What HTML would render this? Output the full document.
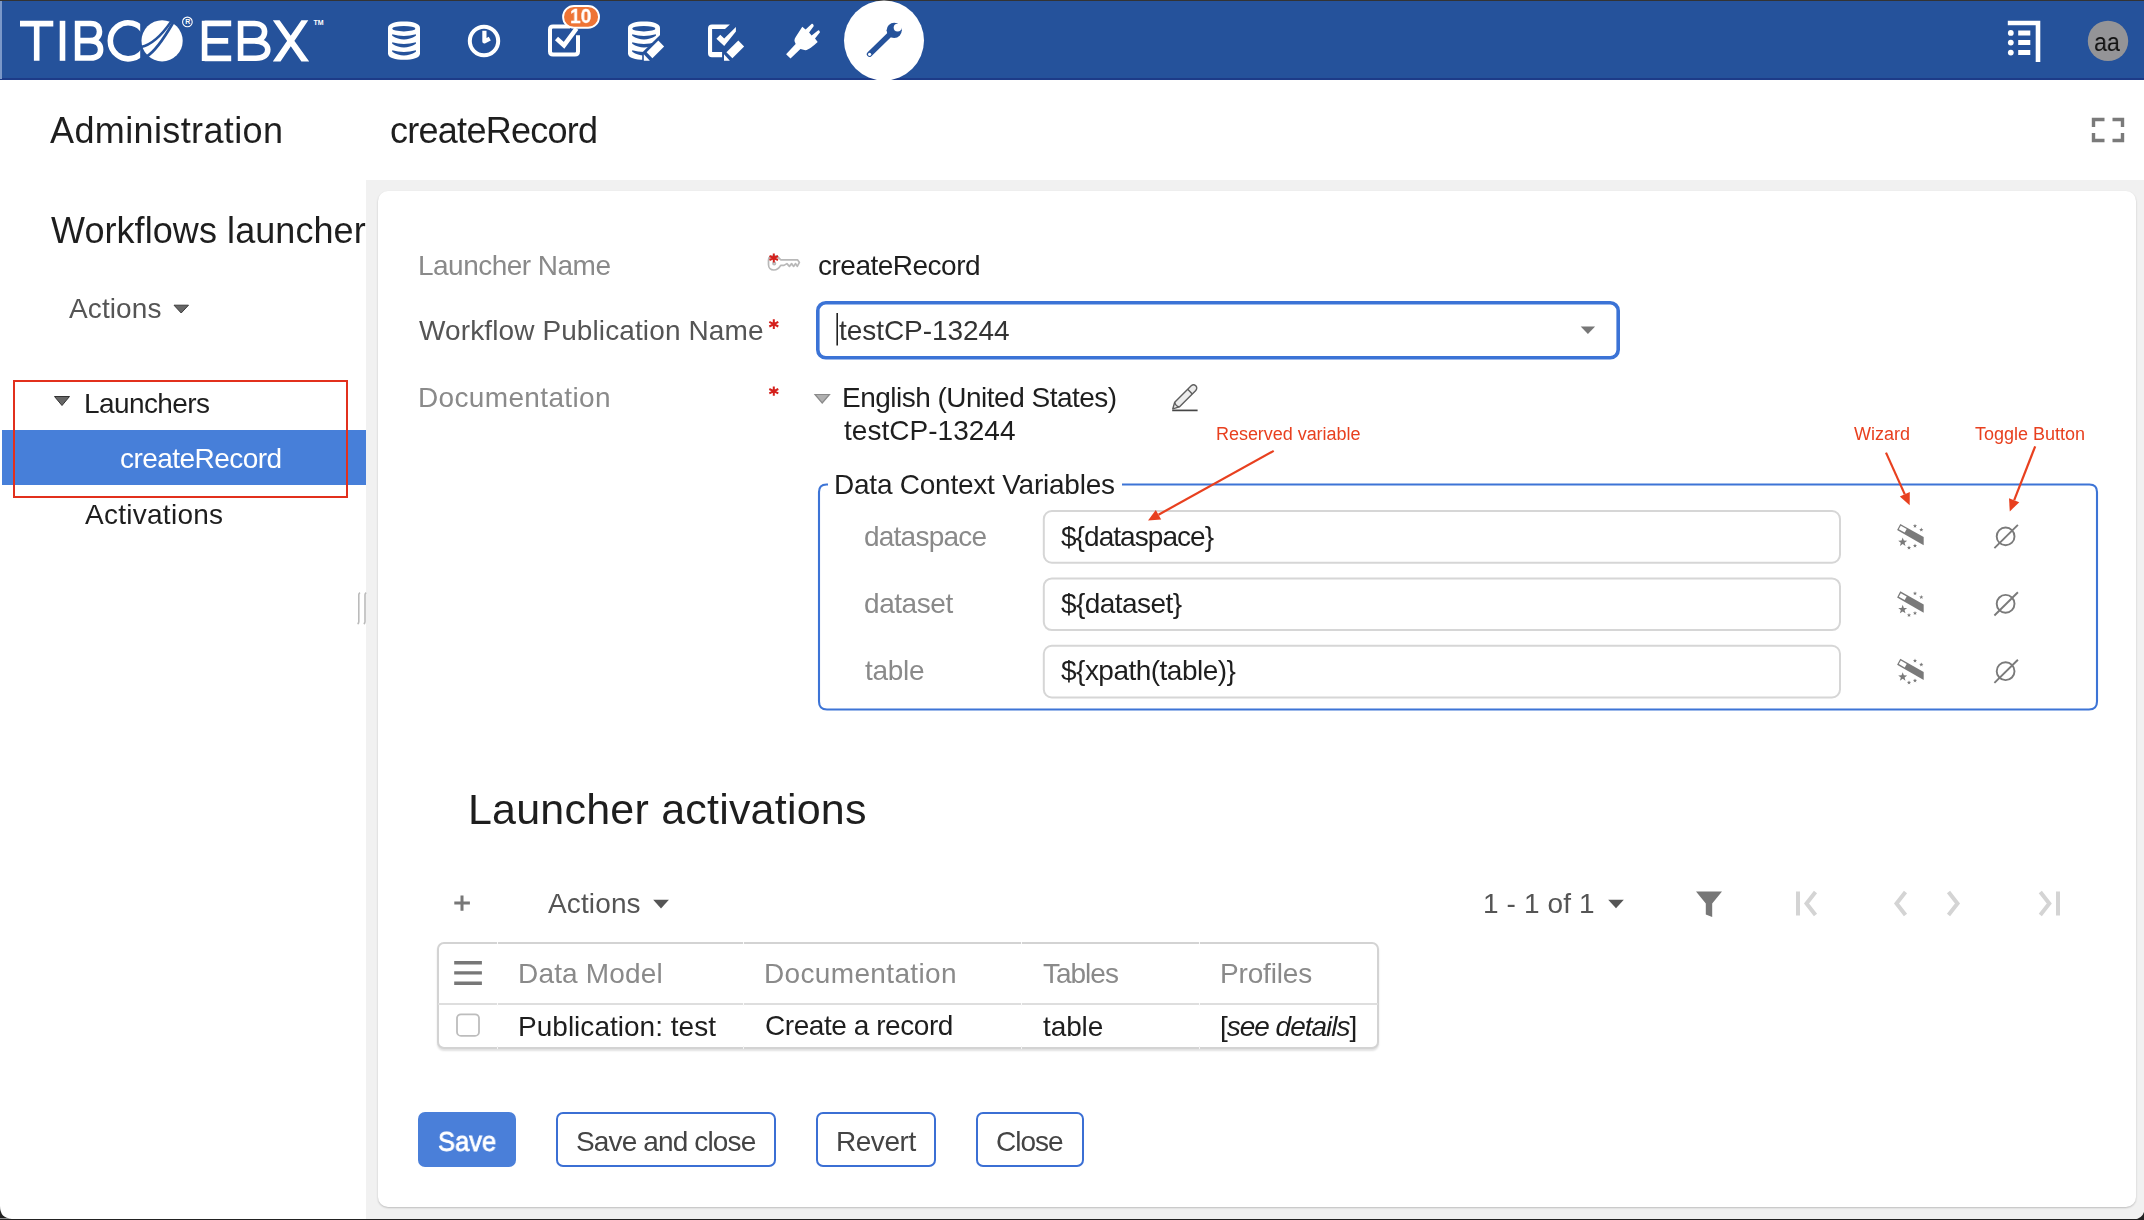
<!DOCTYPE html>
<html><head><meta charset="utf-8"><title>createRecord - TIBCO EBX</title>
<style>
html,body{margin:0;padding:0;background:#fff;}
body{width:2144px;height:1220px;position:relative;overflow:hidden;font-family:"Liberation Sans", sans-serif;}
.t{position:absolute;white-space:nowrap;will-change:transform;}
</style></head><body>
<div style="position:absolute;left:0px;top:0px;width:2144px;height:1px;background:#333"></div>
<div style="position:absolute;left:0px;top:1px;width:2144px;height:78px;background:#25529b"></div>
<div style="position:absolute;left:0px;top:78px;width:2144px;height:1.5px;background:#1d3b88"></div>
<div style="position:absolute;left:0px;top:1px;width:2px;height:78px;background:#7b98c9"></div>
<svg style="position:absolute;left:0px;top:0px;" width="340" height="80" viewBox="0 0 340 80"><defs><clipPath id="cclip"><rect x="100" y="10" width="40.2" height="60"/></clipPath></defs><g fill="none" stroke="#fff" stroke-width="5.6">
<path d="M20 23.6H53.3M36.7 23.6V60.8"/>
<path d="M62.5 20.8V60.8"/>
<path d="M77.6 20.8V60.8M77.6 23.5H90.5C97.5 23.5 99.5 27.5 99.5 31.5C99.5 36 96.5 40.6 90 40.6H77.6M90 40.6C98 40.6 100.6 45.5 100.6 49.5C100.6 54.5 97.5 58 90.5 58H77.6"/>
<path clip-path="url(#cclip)" d="M144.61 33.19A18 18 0 1 0 144.61 48.41"/>
<path d="M204.6 20.8V61M204.6 23.4H231.2M204.6 40.9H228.2M204.6 58.4H231.2"/>
<path d="M240.6 20.8V61M240.6 23.5H254C261 23.5 264.6 27 264.6 31.5C264.6 36.5 261 40.9 254 40.9H240.6M254 40.9C263 40.9 267.8 45 267.8 49.6C267.8 54.5 264 58.2 256 58.2H240.6"/>

</g>
<path d="M272.8 20.2H279.6L309.2 61.6H301.4ZM301.4 20.2H308.3L280.5 61.6H272.8Z" fill="#fff"/>
<circle cx="162.1" cy="40.8" r="20.6" fill="#fff"/>
<path d="M141 47 Q155.5 44.15 171.2 21.5" fill="none" stroke="#25529b" stroke-width="2.4"/>
<path d="M146.5 56.5 Q156.75 50.85 173.2 22.5" fill="none" stroke="#25529b" stroke-width="2.7"/>
<circle cx="187.4" cy="21.9" r="4.8" fill="none" stroke="#fff" stroke-width="1.1"/>
<text x="185.2" y="24.3" font-family="Liberation Sans" font-size="7" font-weight="bold" fill="#fff">R</text>
<text x="313.5" y="24.5" font-family="Liberation Sans" font-size="7" font-weight="bold" fill="#fff">TM</text>
</svg>
<svg style="position:absolute;left:0px;top:0px;overflow:visible" width="2144" height="80" viewBox="0 0 2144 80">
<!-- database -->
<path d="M388 28C388 23.5 395.5 21.6 404 21.6C412.5 21.6 420 23.5 420 28V53.5C420 58 412.5 59.8 404 59.8C395.5 59.8 388 58 388 53.5Z" fill="#fff"/>
<g fill="#25529b">
<ellipse cx="403.8" cy="28.7" rx="11.6" ry="2.7"/>
<path d="M392.2 34.3Q403.8 37.9 415.9 34.3V35.7Q403.8 43.2 392.2 35.7Z"/>
<path d="M392.2 42.3Q403.8 45.9 415.9 42.3V43.7Q403.8 51.2 392.2 43.7Z"/>
<path d="M392.2 50.3Q403.8 53.9 415.9 50.3V51.7Q403.8 59.2 392.2 51.7Z"/>
</g>
<!-- clock -->
<circle cx="484" cy="41" r="14.2" fill="none" stroke="#fff" stroke-width="4"/>
<path d="M484.4 30.7V41.5L489.8 38.6" fill="none" stroke="#fff" stroke-width="4.2" stroke-linejoin="round"/>
<!-- tasks -->
<path d="M570 26.5H553Q550 26.5 550 29.5V51.5Q550 54.5 553 54.5H575Q578 54.5 578 51.5V35.2" fill="none" stroke="#fff" stroke-width="4"/>
<path d="M556.5 38.5L564 45.3L576.5 28.5" fill="none" stroke="#fff" stroke-width="4.6"/>
<rect x="563.1" y="6" width="35.9" height="21.8" rx="10.9" fill="#ee7435" stroke="#fff" stroke-width="1.9"/>
<!-- db edit -->
<path d="M628 28C628 23.5 635.5 21.6 644 21.6C652.5 21.6 660 23.5 660 28V53.5C660 58 652.5 59.8 644 59.8C635.5 59.8 628 58 628 53.5Z" fill="#fff"/>
<g fill="#25529b">
<ellipse cx="643.8" cy="28.7" rx="11.6" ry="2.7"/>
<path d="M632.2 34.3Q643.8 37.9 655.9 34.3V35.7Q643.8 43.2 632.2 35.7Z"/>
<path d="M632.2 42.3Q643.8 45.9 655.9 42.3V43.7Q643.8 51.2 632.2 43.7Z"/>
<path d="M632.2 50.3Q643.8 53.9 655.9 50.3V51.7Q643.8 59.2 632.2 51.7Z"/>
<path d="M642.2 52.6L660.6 34.4H668V66H642.2Z"/>
</g>
<path d="M646.6 52.3L658.3 40.6L664.1 46.6L652.4 58.2Z" fill="#fff"/>
<path d="M643.8 54.3V60.8H649.9Z" fill="#fff"/>
<!-- checklist edit -->
<path d="M708 28.5Q708 24.4 712 24.4H729.9L725 29.1H712.1V51.9H722.1V57.2H712Q708 57.2 708 53.2Z" fill="#fff"/>
<path d="M716.4 38.8L720.3 34.7L724.2 38.5L735.9 26.9V31.4L724.2 46.1Z" fill="#fff"/>
<path d="M726.4 52.3L738.3 40.4L744.1 46.4L732.4 58.2Z" fill="#fff"/>
<path d="M724 54.3V60.8H729.9Z" fill="#fff"/>
<!-- plug -->
<path d="M786.1 54.3L797 42.6L802 47.6L790.5 58.4Z" fill="#fff"/>
<path d="M795.6 43.7C794 41 794 39.5 796 36.5L802.3 26.7L805.6 29.5L811.8 23.8Q813 23 813.8 25.9L809.1 32.6L811.6 35.5L818.3 30.2Q819.5 30 820 32.2L815 38.6L817.7 42C813 46 809 49.8 805.4 50.2L800.5 49Z" fill="#fff"/>
<!-- wrench circle -->
<circle cx="884" cy="40.5" r="40" fill="#fff"/>
<path d="M869.5 54.2L889.5 34.8" stroke="#25529b" stroke-width="5.4" stroke-linecap="round" fill="none"/>
<circle cx="894.2" cy="30.3" r="7.6" fill="#25529b"/>
<circle cx="897.6" cy="27.6" r="3.9" fill="#fff"/>
<path d="M897.6 27.6L903 22.3" stroke="#fff" stroke-width="5"/>
<circle cx="869.6" cy="54.3" r="1.6" fill="#fff"/>
<!-- list -->
<path d="M2007.8 23H2038V62" fill="none" stroke="#fff" stroke-width="4.6"/>
<circle cx="2010.8" cy="32.9" r="2.9" fill="#fff"/><circle cx="2010.8" cy="42.6" r="2.9" fill="#fff"/><circle cx="2010.8" cy="52.6" r="2.9" fill="#fff"/>
<path d="M2018.2 33H2030.3M2018.2 42.6H2030.3M2018.2 52.5H2030.3" stroke="#fff" stroke-width="5"/>
<!-- avatar -->
<circle cx="2108" cy="40.9" r="20.2" fill="#949497"/>
</svg>
<svg style="position:absolute;left:2090px;top:116px;" width="36" height="28" viewBox="0 0 36 28"><path d="M3.5 11V3.5H14.5M22.5 3.5H32.5V11M32.5 17V24.5H22.5M14.5 24.5H3.5V17" fill="none" stroke="#7a7a7a" stroke-width="3.4"/></svg>
<div style="position:absolute;left:366px;top:180px;width:1778px;height:1038.5px;background:#f1f1f1"></div>
<div style="position:absolute;left:378px;top:191px;width:1758px;height:1016px;background:#fff;border-radius:10px;box-shadow:0 1px 2px rgba(0,0,0,.22)"></div>
<div style="position:absolute;left:2px;top:429.8px;width:364px;height:55.0px;background:#477fd9"></div>
<div style="position:absolute;left:12.8px;top:379.8px;width:335.3px;height:118.0px;border:2px solid #e2301c;box-sizing:border-box"></div>
<svg style="position:absolute;left:0px;top:0px;" width="370" height="640" viewBox="0 0 370 640">
<path d="M174 305.2H188.5L181.2 313Z" fill="#666" stroke="#3c3c3c" stroke-width="1"/>
<path d="M54.5 396.5H69.5L62 405.5Z" fill="#666" stroke="#333" stroke-width="1"/>
<path d="M357.6 624Q358.8 623.2 358.8 621.8V594.8Q358.8 593.4 360 592.6M363.8 624Q365 623.2 365 621.8V594.8Q365 593.4 366.2 592.6" stroke="#bbb" stroke-width="1.6" fill="none"/>
</svg>
<svg style="position:absolute;left:0px;top:0px;overflow:visible" width="2144" height="1220" viewBox="0 0 2144 1220">
<!-- key icon -->
<g fill="none" stroke="#b8b8b8" stroke-width="1.7" stroke-linejoin="round">
<path d="M780.7 259.8H797.5L799.4 262.4L797.3 266.4L795.6 263.6L793.6 266.4L791.6 263.6L789.4 266.4L786.9 263.6L784 265.4H780.7C779 268.5 776.5 270 773.8 270C770.5 270 768.5 267.5 768.5 264.5V260C768.5 257 771 255.8 774.5 255.8C777 255.8 779 257.5 780.7 259.8Z"/>
<circle cx="774.2" cy="263.4" r="1.2"/>
</g>
<!-- asterisks -->
<g stroke="#d4201c" stroke-width="2" fill="none" stroke-linecap="butt">
<path d="M773.8 253.5V262.5M769.5 256L778 260M769.5 260L778 256"/>
<path d="M773.8 319.3V329M769.3 321.8L778.3 326.5M769.3 326.5L778.3 321.8"/>
<path d="M773.8 386.5V395.7M769.3 389L778.3 393.3M769.3 393.3L778.3 389"/>
</g>
<!-- input focus -->
<rect x="817.8" y="302.8" width="800.4" height="55" rx="8" fill="#fff" stroke="#3b73d6" stroke-width="3.6"/>
<path d="M837.2 313V345.5" stroke="#222" stroke-width="1.6"/>
<path d="M1580.7 326.4H1595.1L1587.9 334Z" fill="#777"/>
<!-- doc triangle -->
<path d="M815 394.5H829.5L822.2 403Z" fill="#b0b0b0" stroke="#8a8a8a" stroke-width="1.2"/>
<!-- pencil -->
<g stroke="#5e5e5e" stroke-width="1.4" stroke-linejoin="round">
<path d="M1172.8 408.8L1174.7 402.3L1191.2 385.8A3.25 3.25 0 0 1 1195.8 390.4L1179.3 406.9Z" fill="#ececec"/>
<path d="M1187.7 389.3L1192.3 393.9M1174.7 402.3Q1175.5 406 1179.3 406.9" fill="none"/>
<path d="M1172.2 410.4H1197.6" stroke="#464646" stroke-width="1.7"/>
</g>
<!-- fieldset -->
<path d="M828 484.5H826.5Q819 484.5 819 492V701.5Q819 709.5 827 709.5H2089Q2097 709.5 2097 701.5V492Q2097 484.5 2089.5 484.5H1122" fill="none" stroke="#3d74d6" stroke-width="2.1"/>
<rect x="1043.8" y="511.0" width="796.2" height="51.7" rx="8" fill="#fff" stroke="#d6d6d6" stroke-width="2"/><g transform="translate(1897,523.5)">
<path d="M3.3 0.4L26.7 13.6V21.8L0.1 6.5Z" fill="#7a7a7a"/>
<path d="M3.8 2.3L9.7 5.6L7.7 9.1L1.8 5.8Z" fill="#fff"/>
<g fill="#7a7a7a"><path d="M5.70 13.90L6.86 17.00L10.17 17.15L7.58 19.21L8.46 22.40L5.70 20.57L2.94 22.40L3.82 19.21L1.23 17.15L4.54 17.00Z"/><path d="M18.00 0.30L18.54 1.75L20.09 1.82L18.88 2.79L19.29 4.28L18.00 3.42L16.71 4.28L17.12 2.79L15.91 1.82L17.46 1.75Z"/><path d="M24.30 4.10L24.84 5.55L26.39 5.62L25.18 6.59L25.59 8.08L24.30 7.22L23.01 8.08L23.42 6.59L22.21 5.62L23.76 5.55Z"/><path d="M12.00 22.10L12.54 23.55L14.09 23.62L12.88 24.59L13.29 26.08L12.00 25.22L10.71 26.08L11.12 24.59L9.91 23.62L11.46 23.55Z"/><path d="M18.00 20.10L18.54 21.55L20.09 21.62L18.88 22.59L19.29 24.08L18.00 23.22L16.71 24.08L17.12 22.59L15.91 21.62L17.46 21.55Z"/></g>
</g><g transform="translate(1994,524.5)" fill="none" stroke="#7a7a7a" stroke-width="1.9">
<circle cx="11.6" cy="11.9" r="8.9"/><path d="M0.4 23.6L23.9 0.4"/>
</g><rect x="1043.8" y="578.4" width="796.2" height="51.7" rx="8" fill="#fff" stroke="#d6d6d6" stroke-width="2"/><g transform="translate(1897,590.9)">
<path d="M3.3 0.4L26.7 13.6V21.8L0.1 6.5Z" fill="#7a7a7a"/>
<path d="M3.8 2.3L9.7 5.6L7.7 9.1L1.8 5.8Z" fill="#fff"/>
<g fill="#7a7a7a"><path d="M5.70 13.90L6.86 17.00L10.17 17.15L7.58 19.21L8.46 22.40L5.70 20.57L2.94 22.40L3.82 19.21L1.23 17.15L4.54 17.00Z"/><path d="M18.00 0.30L18.54 1.75L20.09 1.82L18.88 2.79L19.29 4.28L18.00 3.42L16.71 4.28L17.12 2.79L15.91 1.82L17.46 1.75Z"/><path d="M24.30 4.10L24.84 5.55L26.39 5.62L25.18 6.59L25.59 8.08L24.30 7.22L23.01 8.08L23.42 6.59L22.21 5.62L23.76 5.55Z"/><path d="M12.00 22.10L12.54 23.55L14.09 23.62L12.88 24.59L13.29 26.08L12.00 25.22L10.71 26.08L11.12 24.59L9.91 23.62L11.46 23.55Z"/><path d="M18.00 20.10L18.54 21.55L20.09 21.62L18.88 22.59L19.29 24.08L18.00 23.22L16.71 24.08L17.12 22.59L15.91 21.62L17.46 21.55Z"/></g>
</g><g transform="translate(1994,591.9)" fill="none" stroke="#7a7a7a" stroke-width="1.9">
<circle cx="11.6" cy="11.9" r="8.9"/><path d="M0.4 23.6L23.9 0.4"/>
</g><rect x="1043.8" y="645.8" width="796.2" height="51.7" rx="8" fill="#fff" stroke="#d6d6d6" stroke-width="2"/><g transform="translate(1897,658.3)">
<path d="M3.3 0.4L26.7 13.6V21.8L0.1 6.5Z" fill="#7a7a7a"/>
<path d="M3.8 2.3L9.7 5.6L7.7 9.1L1.8 5.8Z" fill="#fff"/>
<g fill="#7a7a7a"><path d="M5.70 13.90L6.86 17.00L10.17 17.15L7.58 19.21L8.46 22.40L5.70 20.57L2.94 22.40L3.82 19.21L1.23 17.15L4.54 17.00Z"/><path d="M18.00 0.30L18.54 1.75L20.09 1.82L18.88 2.79L19.29 4.28L18.00 3.42L16.71 4.28L17.12 2.79L15.91 1.82L17.46 1.75Z"/><path d="M24.30 4.10L24.84 5.55L26.39 5.62L25.18 6.59L25.59 8.08L24.30 7.22L23.01 8.08L23.42 6.59L22.21 5.62L23.76 5.55Z"/><path d="M12.00 22.10L12.54 23.55L14.09 23.62L12.88 24.59L13.29 26.08L12.00 25.22L10.71 26.08L11.12 24.59L9.91 23.62L11.46 23.55Z"/><path d="M18.00 20.10L18.54 21.55L20.09 21.62L18.88 22.59L19.29 24.08L18.00 23.22L16.71 24.08L17.12 22.59L15.91 21.62L17.46 21.55Z"/></g>
</g><g transform="translate(1994,659.3)" fill="none" stroke="#7a7a7a" stroke-width="1.9">
<circle cx="11.6" cy="11.9" r="8.9"/><path d="M0.4 23.6L23.9 0.4"/>
</g><path d="M1273.7 450.9L1158.5 514.7" stroke="#e8401f" stroke-width="2.2" fill="none"/><path d="M1148 520.5L1155.8 509.9L1161.2 519.5Z" fill="#e8401f"/><path d="M1886 452.6L1904.8 494.4" stroke="#e8401f" stroke-width="2.2" fill="none"/><path d="M1909.7 505.3L1899.8 496.6L1909.8 492.1Z" fill="#e8401f"/><path d="M2035.2 446.3L2014.2 500.2" stroke="#e8401f" stroke-width="2.2" fill="none"/><path d="M2009.8 511.4L2009.0 498.2L2019.3 502.2Z" fill="#e8401f"/>
<path d="M462 895.6V910.7M454.3 903.1H469.9" stroke="#777" stroke-width="3"/>
<path d="M653.2 899.8H668.9L661 908.5Z" fill="#555"/>
<path d="M1608.2 899.8H1623.8L1616 908.2Z" fill="#555"/>
<path d="M1696 891.5H1722L1712.2 903.5V917L1705.8 914.5V903.5Z" fill="#777"/>
<g stroke="#d4d4d4" stroke-width="4" fill="none">
<path d="M1798 891.5V915.5M1815.5 892L1806.5 903.5L1815.5 915"/>
<path d="M1905.5 892L1896.5 903.5L1905.5 915"/>
<path d="M1948.5 892L1957.5 903.5L1948.5 915"/>
<path d="M2040.3 892L2049.3 903.5L2040.3 915M2058 891.5V915.5"/>
</g>
</svg>
<div style="position:absolute;left:437px;top:942px;width:942px;height:106.5px;border:2px solid #d3d3d3;border-radius:7px;box-sizing:border-box;box-shadow:0 2px 2px rgba(0,0,0,.12);background:#fff"></div>
<div style="position:absolute;left:438px;top:1003px;width:940px;height:2px;background:#dedede"></div>
<svg style="position:absolute;left:0px;top:0px;" width="2144" height="1220" viewBox="0 0 2144 1220">
<path d="M454.2 962.7H481.9M454.2 972.9H481.9M454.2 983.2H481.9" stroke="#777" stroke-width="3.4"/>
<rect x="457" y="1014.3" width="22" height="21.6" rx="4" fill="#fff" stroke="#bdbdbd" stroke-width="1.8"/>
</svg>
<div style="position:absolute;left:418px;top:1112px;width:98px;height:55px;background:#4a7fd9;border-radius:7px"></div>
<div style="position:absolute;left:556px;top:1112px;width:220px;height:55px;border:2px solid #3b6fd4;border-radius:7px;box-sizing:border-box"></div>
<div style="position:absolute;left:816px;top:1112px;width:120px;height:55px;border:2px solid #3b6fd4;border-radius:7px;box-sizing:border-box"></div>
<div style="position:absolute;left:976px;top:1112px;width:108px;height:55px;border:2px solid #3b6fd4;border-radius:7px;box-sizing:border-box"></div>
<div style="position:absolute;left:0px;top:1218.5px;width:2144px;height:1.5px;background:#222"></div>
<svg style="position:absolute;left:0px;top:1200px;" width="20" height="20" viewBox="0 0 20 20"><path d="M0 6Q0 18.5 12 18.5H0Z" fill="#222"/></svg>
<svg style="position:absolute;left:2124px;top:1200px;" width="20" height="20" viewBox="0 0 20 20"><path d="M20 12Q18 18.5 10 19.5H20Z" fill="#222"/></svg>
<div style="position:absolute;left:497px;top:941.5px;width:1.1999999999999886px;height:2.5px;background:#fafafa"></div>
<div style="position:absolute;left:497px;top:1002.5px;width:1.1999999999999886px;height:3.0px;background:#fafafa"></div>
<div style="position:absolute;left:497px;top:1045.5px;width:1.1999999999999886px;height:3.5px;background:#f4f4f4"></div>
<div style="position:absolute;left:743px;top:941.5px;width:1.2000000000000455px;height:2.5px;background:#fafafa"></div>
<div style="position:absolute;left:743px;top:1002.5px;width:1.2000000000000455px;height:3.0px;background:#fafafa"></div>
<div style="position:absolute;left:743px;top:1045.5px;width:1.2000000000000455px;height:3.5px;background:#f4f4f4"></div>
<div style="position:absolute;left:1021px;top:941.5px;width:1.2000000000000455px;height:2.5px;background:#fafafa"></div>
<div style="position:absolute;left:1021px;top:1002.5px;width:1.2000000000000455px;height:3.0px;background:#fafafa"></div>
<div style="position:absolute;left:1021px;top:1045.5px;width:1.2000000000000455px;height:3.5px;background:#f4f4f4"></div>
<div style="position:absolute;left:1199px;top:941.5px;width:1.2000000000000455px;height:2.5px;background:#fafafa"></div>
<div style="position:absolute;left:1199px;top:1002.5px;width:1.2000000000000455px;height:3.0px;background:#fafafa"></div>
<div style="position:absolute;left:1199px;top:1045.5px;width:1.2000000000000455px;height:3.5px;background:#f4f4f4"></div>
<div class="t" style="left:50.3px;top:112.9px;font-size:36px;line-height:36px;color:#1e1e1e;letter-spacing:0.38px">Administration</div>
<div class="t" style="left:390.0px;top:112.9px;font-size:36px;line-height:36px;color:#1e1e1e;letter-spacing:-0.73px">createRecord</div>
<div class="t" style="left:50.8px;top:212.7px;font-size:36px;line-height:36px;color:#1e1e1e;letter-spacing:0.07px;width:315.2px;overflow:hidden">Workflows launcher</div>
<div class="t" style="left:68.5px;top:294.7px;font-size:28px;line-height:28px;color:#555;letter-spacing:0.11px">Actions</div>
<div class="t" style="left:83.8px;top:389.7px;font-size:28px;line-height:28px;color:#1e1e1e;letter-spacing:-0.59px">Launchers</div>
<div class="t" style="left:119.8px;top:445.3px;font-size:28px;line-height:28px;color:#fff;letter-spacing:-0.54px">createRecord</div>
<div class="t" style="left:84.6px;top:500.7px;font-size:28px;line-height:28px;color:#1e1e1e;letter-spacing:0.27px">Activations</div>
<div class="t" style="left:417.6px;top:251.5px;font-size:28px;line-height:28px;color:#8a8a8a;letter-spacing:-0.52px">Launcher Name</div>
<div class="t" style="left:419.0px;top:316.5px;font-size:28px;line-height:28px;color:#555;letter-spacing:0.11px">Workflow Publication Name</div>
<div class="t" style="left:417.6px;top:384.1px;font-size:28px;line-height:28px;color:#8a8a8a;letter-spacing:0.35px">Documentation</div>
<div class="t" style="left:817.6px;top:251.5px;font-size:28px;line-height:28px;color:#1e1e1e;letter-spacing:-0.50px">createRecord</div>
<div class="t" style="left:838.5px;top:316.5px;font-size:28px;line-height:28px;color:#333;letter-spacing:-0.05px">testCP-13244</div>
<div class="t" style="left:841.5px;top:384.1px;font-size:28px;line-height:28px;color:#1e1e1e;letter-spacing:-0.51px">English (United States)</div>
<div class="t" style="left:843.5px;top:417.4px;font-size:28px;line-height:28px;color:#1e1e1e;letter-spacing:0.03px">testCP-13244</div>
<div class="t" style="left:833.9px;top:471.3px;font-size:28px;line-height:28px;color:#1e1e1e;letter-spacing:-0.23px">Data Context Variables</div>
<div class="t" style="left:863.9px;top:523.3px;font-size:28px;line-height:28px;color:#8a8a8a;letter-spacing:-0.77px">dataspace</div>
<div class="t" style="left:864.0px;top:590.1px;font-size:28px;line-height:28px;color:#8a8a8a;letter-spacing:-0.44px">dataset</div>
<div class="t" style="left:865.0px;top:657.4px;font-size:28px;line-height:28px;color:#8a8a8a;letter-spacing:-0.29px">table</div>
<div class="t" style="left:1061.0px;top:522.7px;font-size:28px;line-height:28px;color:#1e1e1e;letter-spacing:-0.95px">${dataspace}</div>
<div class="t" style="left:1061.0px;top:589.7px;font-size:28px;line-height:28px;color:#1e1e1e;letter-spacing:-0.55px">${dataset}</div>
<div class="t" style="left:1061.0px;top:657.2px;font-size:28px;line-height:28px;color:#1e1e1e;letter-spacing:-0.52px">${xpath(table)}</div>
<div class="t" style="left:1215.9px;top:425.1px;font-size:18px;line-height:18px;color:#e8401f;letter-spacing:-0.04px">Reserved variable</div>
<div class="t" style="left:1853.6px;top:425.2px;font-size:18px;line-height:18px;color:#e8401f;letter-spacing:-0.02px">Wizard</div>
<div class="t" style="left:1974.9px;top:425.2px;font-size:18px;line-height:18px;color:#e8401f;letter-spacing:0.00px">Toggle Button</div>
<div class="t" style="left:468.2px;top:787.8px;font-size:43px;line-height:43px;color:#1e1e1e;letter-spacing:0.21px">Launcher activations</div>
<div class="t" style="left:548.4px;top:889.7px;font-size:28px;line-height:28px;color:#555;letter-spacing:0.13px">Actions</div>
<div class="t" style="left:1483.0px;top:889.7px;font-size:28px;line-height:28px;color:#555;letter-spacing:0.12px">1 - 1 of 1</div>
<div class="t" style="left:517.5px;top:959.8px;font-size:28px;line-height:28px;color:#8a8a8a;letter-spacing:0.17px">Data Model</div>
<div class="t" style="left:763.8px;top:959.5px;font-size:28px;line-height:28px;color:#8a8a8a;letter-spacing:0.35px">Documentation</div>
<div class="t" style="left:1042.6px;top:959.6px;font-size:28px;line-height:28px;color:#8a8a8a;letter-spacing:-1.01px">Tables</div>
<div class="t" style="left:1219.5px;top:959.6px;font-size:28px;line-height:28px;color:#8a8a8a;letter-spacing:-0.17px">Profiles</div>
<div class="t" style="left:517.8px;top:1012.8px;font-size:28px;line-height:28px;color:#1e1e1e;letter-spacing:0.02px">Publication: test</div>
<div class="t" style="left:764.8px;top:1012.3px;font-size:28px;line-height:28px;color:#1e1e1e;letter-spacing:-0.44px">Create a record</div>
<div class="t" style="left:1042.6px;top:1012.6px;font-size:28px;line-height:28px;color:#1e1e1e;letter-spacing:-0.11px">table</div>
<div class="t" style="left:1220.1px;top:1012.6px;font-size:28px;line-height:28px;color:#1e1e1e;letter-spacing:-1.02px">[<i>see details</i>]</div>
<div class="t" style="left:437.8px;top:1128.4px;font-size:28px;line-height:28px;color:#fff;letter-spacing:0.00px;transform:scaleX(0.911);transform-origin:0 0;-webkit-text-stroke:0.8px #fff">Save</div>
<div class="t" style="left:575.6px;top:1128.4px;font-size:28px;line-height:28px;color:#444;letter-spacing:-0.86px">Save and close</div>
<div class="t" style="left:835.5px;top:1128.1px;font-size:28px;line-height:28px;color:#444;letter-spacing:-0.46px">Revert</div>
<div class="t" style="left:996.0px;top:1128.1px;font-size:28px;line-height:28px;color:#444;letter-spacing:-1.00px">Close</div>
<div class="t" style="left:2093.9px;top:28.7px;font-size:26px;line-height:26px;color:#111;letter-spacing:0.00px;transform:scaleX(0.892);transform-origin:0 0">aa</div>
<div class="t" style="left:570.0px;top:4.8px;font-size:21px;line-height:21px;color:#fff;letter-spacing:0.00px;transform:scaleX(0.909);transform-origin:0 0;-webkit-text-stroke:0.3px #fff;font-weight:bold">10</div>
</body></html>
